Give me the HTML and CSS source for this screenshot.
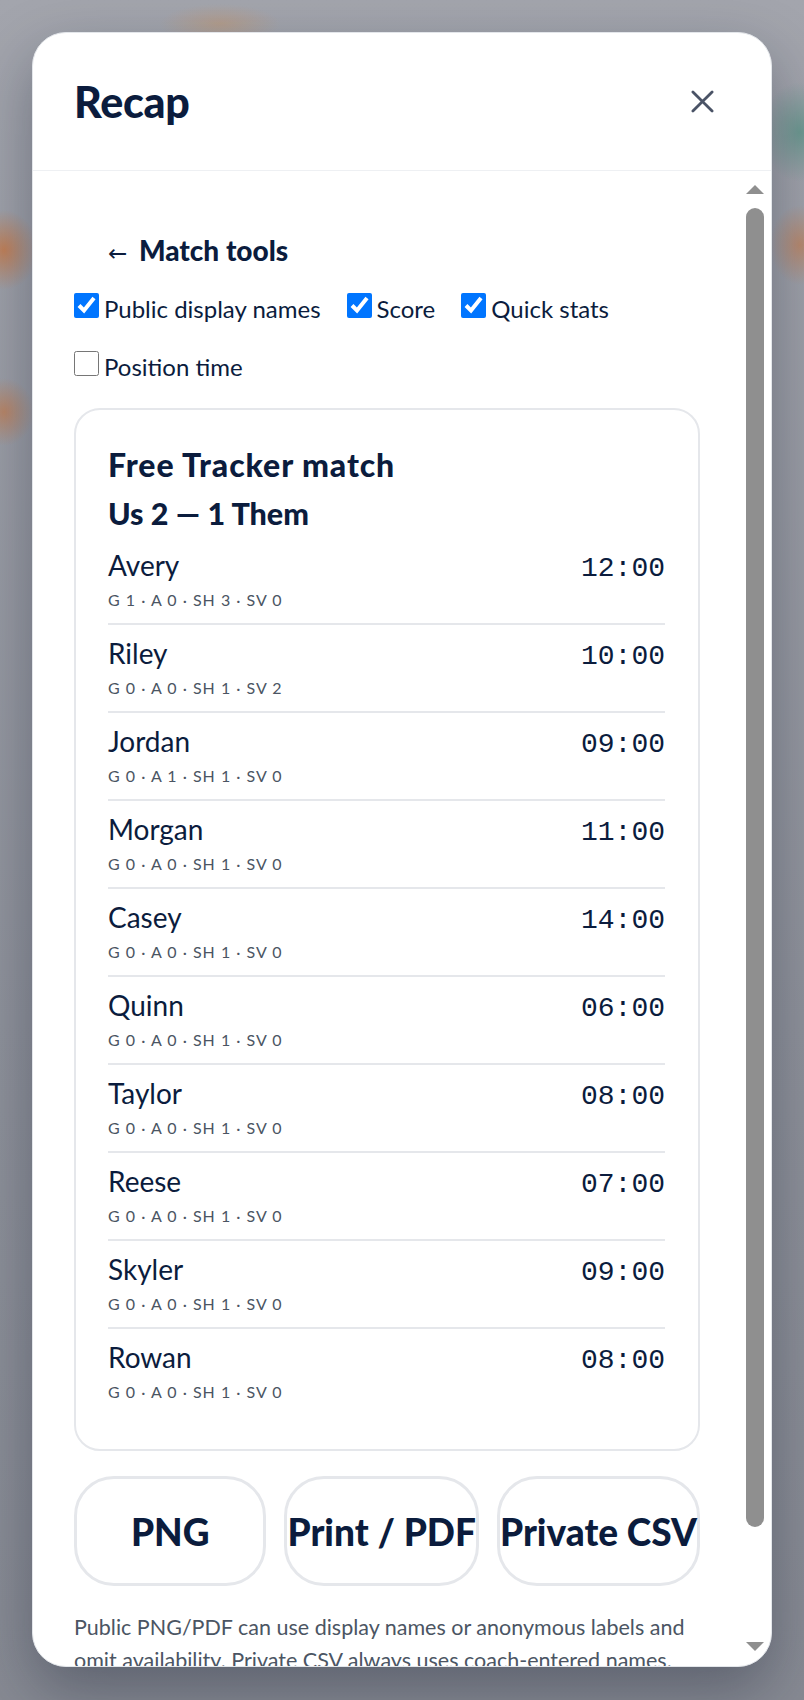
FILE: index.html
```html
<!DOCTYPE html>
<html lang="en">
<head>
  <meta charset="UTF-8">
  <meta name="viewport" content="width=device-width,initial-scale=1.0">
  <title>Recap</title>
  <link rel="stylesheet" href="styles.css">
</head>
<body>
  <div class="overlay">
    <section class="modal" role="dialog" aria-labelledby="recapTitle">
      <header class="modal-head">
        <h2 id="recapTitle">Recap</h2>
        <button class="close" type="button" aria-label="Close">
          <svg viewBox="0 0 24 24" width="24" height="24"><path d="M2 2L22 22M22 2L2 22"/></svg>
        </button>
      </header>

      <div class="modal-main">
        <div class="modal-body">
          <button class="back" type="button"><span class="arrow">←</span> Match tools</button>

          <!-- what goes on the recap -->
          <div class="toggles">
            <label class="toggle"><input type="checkbox" checked> Public display names</label>
            <label class="toggle"><input type="checkbox" checked> Score</label>
            <label class="toggle"><input type="checkbox" checked> Quick stats</label>
            <label class="toggle"><input type="checkbox"> Position time</label>
          </div>

          <!-- recap preview -->
          <article class="card">
            <h3>Free Tracker match</h3>
            <p class="score">Us 2 — 1 Them</p>
            <ul class="players">
              <li class="player"><div><div class="name">Avery</div><div class="stats">G 1 · A 0 · SH 3 · SV 0</div></div><span class="time">12:00</span></li>
              <li class="player"><div><div class="name">Riley</div><div class="stats">G 0 · A 0 · SH 1 · SV 2</div></div><span class="time">10:00</span></li>
              <li class="player"><div><div class="name">Jordan</div><div class="stats">G 0 · A 1 · SH 1 · SV 0</div></div><span class="time">09:00</span></li>
              <li class="player"><div><div class="name">Morgan</div><div class="stats">G 0 · A 0 · SH 1 · SV 0</div></div><span class="time">11:00</span></li>
              <li class="player"><div><div class="name">Casey</div><div class="stats">G 0 · A 0 · SH 1 · SV 0</div></div><span class="time">14:00</span></li>
              <li class="player"><div><div class="name">Quinn</div><div class="stats">G 0 · A 0 · SH 1 · SV 0</div></div><span class="time">06:00</span></li>
              <li class="player"><div><div class="name">Taylor</div><div class="stats">G 0 · A 0 · SH 1 · SV 0</div></div><span class="time">08:00</span></li>
              <li class="player"><div><div class="name">Reese</div><div class="stats">G 0 · A 0 · SH 1 · SV 0</div></div><span class="time">07:00</span></li>
              <li class="player"><div><div class="name">Skyler</div><div class="stats">G 0 · A 0 · SH 1 · SV 0</div></div><span class="time">09:00</span></li>
              <li class="player"><div><div class="name">Rowan</div><div class="stats">G 0 · A 0 · SH 1 · SV 0</div></div><span class="time">08:00</span></li>
            </ul>
          </article>

          <div class="exports">
            <button type="button">PNG</button>
            <button type="button">Print / PDF</button>
            <button type="button">Private CSV</button>
          </div>

          <p class="note">Public PNG/PDF can use display names or anonymous labels and omit availability. Private CSV always uses coach-entered names.</p>
        </div>

        <!-- scrollbar -->
        <div class="scrollbar" aria-hidden="true">
          <span class="sb-up"></span>
          <span class="sb-thumb"></span>
          <span class="sb-down"></span>
        </div>
      </div>
    </section>
  </div>
</body>
</html>
```

FILE: styles.css
```css
*{box-sizing:border-box}
html,body{margin:0;height:100%}
body{
  font-family:Lato,"Noto Sans",sans-serif;color:#0b1c3d;overflow:hidden;
  background:
    radial-gradient(34px 40px at 4px 250px,rgba(205,118,62,.75),transparent),
    radial-gradient(30px 34px at 4px 412px,rgba(205,118,62,.6),transparent),
    radial-gradient(40px 50px at 800px 132px,rgba(96,150,138,.8),transparent),
    radial-gradient(30px 40px at 800px 245px,rgba(205,118,62,.55),transparent),
    radial-gradient(60px 20px at 220px 24px,rgba(196,150,110,.5),transparent),
    linear-gradient(#a3a5ad,#8f929b 60%,#878a93);
}
.overlay{height:1700px;padding:32px;display:flex;justify-content:center}
.modal{width:740px;height:1635px;background:#fff;border:1px solid #e3e6ea;border-radius:34px;box-shadow:0 24px 60px rgba(15,23,42,.35);display:flex;flex-direction:column;overflow:hidden}

.modal-head{flex:none;height:138px;display:flex;align-items:center;justify-content:space-between;padding:0 49px 0 41px;border-bottom:1px solid #eef0f3}
.modal-head h2{margin:0;font-size:43px;font-weight:900;letter-spacing:-.3px}
.close{width:40px;height:40px;padding:0;border:0;background:none;display:flex;align-items:center;justify-content:center;cursor:pointer}
.close svg{width:23px;height:23px;fill:none;stroke:#4a5366;stroke-width:2.9;stroke-linecap:round}

.modal-main{flex:1;min-height:0;display:flex}
.modal-body{flex:1;overflow:hidden;padding:44px 46px 136px 41px}

.scrollbar{flex:none;width:18px;margin-right:7px;padding:14px 0 15px;display:flex;flex-direction:column;align-items:center}
.sb-up,.sb-down{width:0;height:0;border-left:9px solid transparent;border-right:9px solid transparent}
.sb-up{border-bottom:9px solid #8f8f8f}
.sb-down{border-top:9px solid #8f8f8f;margin-top:auto}
.sb-thumb{width:18px;height:1319px;margin-top:14px;border-radius:9px;background:#8f8f8f}

.back{border:0;background:none;padding:18px 34px;font:inherit;font-size:28px;font-weight:900;line-height:35px;color:inherit;cursor:pointer}
.back .arrow{font-family:"DejaVu Sans",sans-serif;font-weight:400;font-size:23px;margin-right:5px}

.toggles{display:flex;flex-wrap:wrap;gap:26px 26px;margin-top:4px}
.toggle{display:flex;align-items:flex-start;gap:5px;font-size:24px;line-height:32px}
.toggle input{width:25px;height:25px;margin:0}

.card{margin-top:25px;border:2px solid #e5e7eb;border-radius:26px;padding:31px 33px 34px 32px}
.card h3,.card .score{margin:0;font-size:30.5px;font-weight:900;line-height:48px}
.card h3{font-size:32px;letter-spacing:.9px}
.players{list-style:none;margin:0;padding:0}
.player{display:flex;justify-content:space-between;align-items:baseline;padding:11px 0;border-bottom:2px solid #e5e7eb}
.player:last-child{border-bottom:0}
.name{font-size:28px;line-height:34px}
.stats{margin-top:6px;font-size:16px;line-height:24px;color:#4b5563;letter-spacing:1px}
.time{font-family:"Liberation Mono",monospace;font-size:28px;line-height:34px}

.exports{display:grid;grid-template-columns:repeat(3,1fr);gap:18px;margin-top:25px}
.exports button{height:110px;padding:0;border:3px solid #e5e7eb;border-radius:40px;background:#fff;font:inherit;font-size:37px;font-weight:900;color:inherit;white-space:nowrap;display:flex;align-items:center;justify-content:center;cursor:pointer}

.note{margin:25px 0 0;font-size:21.5px;line-height:33px;color:#4b5563}
```
